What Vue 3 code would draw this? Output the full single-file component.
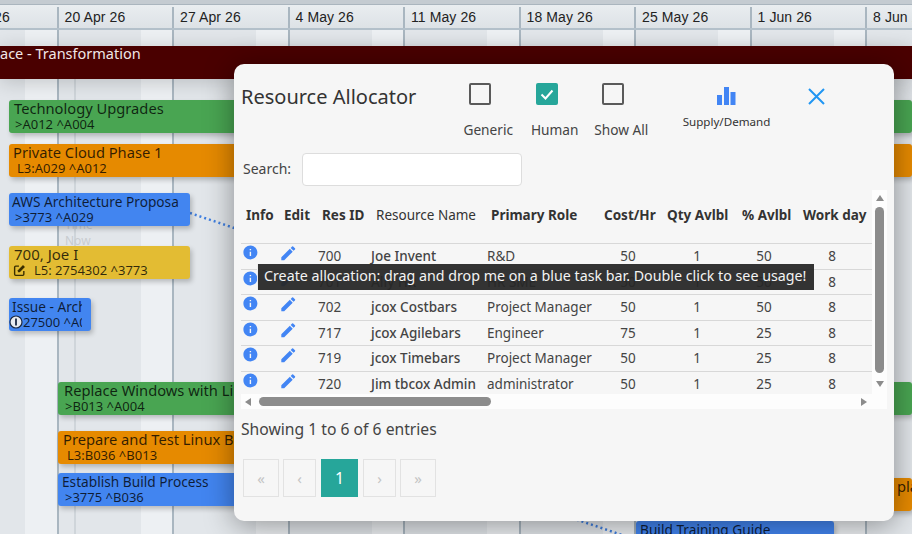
<script setup>
const weeks = ['13 Apr 26', '20 Apr 26', '27 Apr 26', '4 May 26', '11 May 26', '18 May 26', '25 May 26', '1 Jun 26', '8 Jun 26']
const bars = [
  { t: 'Technology Upgrades', s: '>A012 ^A004', c: 'green', x: 9, y: 100, w: 903, tx: 5, sx: 6 },
  { t: 'Private Cloud Phase 1', s: 'L3:A029 ^A012', c: 'orange', x: 9, y: 144, w: 903, tx: 4, sx: 8 },
  { t: 'AWS Architecture Proposa', s: '>3773 ^A029', c: 'blue', x: 9, y: 193, w: 181, tx: 3, sx: 6 },
  { t: '700, Joe I', s: 'L5: 2754302 ^3773', c: 'yellow', x: 9, y: 246, w: 181, tx: 5, sx: 25, edit: true },
  { t: 'Issue - Arch', s: '27500 ^A0', c: 'blue', x: 9, y: 298, w: 82, tx: 3, sx: 14, issue: true, clip: 73 },
  { t: 'Replace Windows with Linux', s: '>B013 ^A004', c: 'green', x: 58, y: 382, w: 854, tx: 6, sx: 7 },
  { t: 'Prepare and Test Linux Build', s: 'L3:B036 ^B013', c: 'orange', x: 58, y: 431, w: 600, tx: 5, sx: 9 },
  { t: 'Establish Build Process', s: '>3775 ^B036', c: 'blue', x: 58, y: 473, w: 600, tx: 4, sx: 7 },
  { t: 'plan', s: '', c: 'orange', x: 700, y: 478, w: 212, tx: 197, sx: 0 },
  { t: 'Build Training Guide', s: '', c: 'blue', x: 636, y: 521, w: 198, tx: 4, sx: 4 }
]
const columns = [
  { label: 'Info', w: 38, bold: true },
  { label: 'Edit', w: 38, bold: true },
  { label: 'Res ID', w: 54, bold: true },
  { label: 'Resource Name', w: 115 },
  { label: 'Primary Role', w: 113, bold: true },
  { label: 'Cost/Hr', w: 63, bold: true },
  { label: 'Qty Avlbl', w: 75, bold: true },
  { label: '% Avlbl', w: 61, bold: true },
  { label: 'Work day', w: 74, bold: true }
]
const rows = [
  ['700', 'Joe Invent', 'R&D', '50', '1', '50', '8'],
  ['701', 'Ally HR', 'HR SME', '50', '1', '50', '8'],
  ['702', 'jcox Costbars', 'Project Manager', '50', '1', '50', '8'],
  ['717', 'jcox Agilebars', 'Engineer', '75', '1', '25', '8'],
  ['719', 'jcox Timebars', 'Project Manager', '50', '1', '25', '8'],
  ['720', 'Jim tbcox Admin', 'administrator', '50', '1', '25', '8']
]
const checks = [
  { label: 'Generic', on: false },
  { label: 'Human', on: true },
  { label: 'Show All', on: false }
]
const pages = ['«', '‹', '1', '›', '»']
</script>

<template>
  <div class="page">
    <div class="top-strip"></div>
    <div class="weeks">
      <div v-for="w in weeks" :key="w" class="week">{{ w }}</div>
    </div>
    <div class="days">
      <div v-for="w in weeks" :key="w" class="day-week"></div>
    </div>
    <div class="canvas">
      <div v-for="w in weeks" :key="w" class="col"></div>
    </div>

    <div class="now-line"></div>
    <div class="now-text">Time<br />Now</div>

    <div class="summary">ace - Transformation</div>

    <svg class="links" width="912" height="534">
      <path d="M190 213 L240 230" />
      <path d="M572 518 L625 536" />
    </svg>

    <div
      v-for="b in bars"
      :key="b.t"
      class="bar"
      :class="b.c"
      :style="{ left: b.x + 'px', top: b.y + 'px', width: b.w + 'px' }"
    >
      <div class="bar-title" :style="{ paddingLeft: b.tx + 'px', maxWidth: (b.clip || b.w) + 'px' }">{{ b.t }}</div>
      <div class="bar-sub" :style="{ paddingLeft: b.sx + 'px', maxWidth: (b.clip || b.w) + 'px' }">{{ b.s }}</div>
      <svg v-if="b.edit" class="bar-edit" viewBox="0 0 24 24" width="13" height="13">
        <path d="M11 4H5a2 2 0 0 0-2 2v13a2 2 0 0 0 2 2h13a2 2 0 0 0 2-2v-6" fill="none" stroke="#3a2f00" stroke-width="2.6" />
        <path d="M9 15v-3.5L18.5 2 22 5.5 12.500 15z" fill="#3a2f00" />
      </svg>
      <svg v-if="b.issue" class="bar-issue" viewBox="0 0 14 14" width="14" height="14">
        <circle cx="7" cy="7" r="6" fill="#e8ebf0" stroke="#1c2a44" stroke-width="1.200" />
        <rect x="6.100" y="3.500" width="1.800" height="7" fill="#1c2a44" />
      </svg>
    </div>

    <section class="modal">
      <header class="modal-head">
        <h2 class="title">Resource Allocator</h2>
        <div v-for="c in checks" :key="c.label" class="check">
          <span class="box" :class="{ on: c.on }">
            <svg v-if="c.on" viewBox="0 0 22 22" width="22" height="22">
              <path d="M5.500 11.500 L9.500 15.500 L16.500 7.500" fill="none" stroke="#fff" stroke-width="2" />
            </svg>
          </span>
          <span class="check-label">{{ c.label }}</span>
        </div>
        <div class="supply">
          <svg viewBox="0 0 19 18" width="19" height="18">
            <rect x="0" y="8" width="5" height="10" fill="#4285f4" />
            <rect x="7" y="0" width="5" height="18" fill="#4285f4" />
            <rect x="13.500" y="5" width="5" height="13" fill="#4285f4" />
          </svg>
          <span class="supply-label">Supply/Demand</span>
        </div>
        <svg class="close" viewBox="0 0 17 17" width="17" height="17">
          <path d="M1 1 L16 16 M16 1 L1 16" stroke="#2196f3" stroke-width="2" fill="none" />
        </svg>
      </header>

      <div class="search">
        <label class="search-label">Search:</label>
        <input class="search-input" type="text" />
      </div>

      <div class="scroller">
        <div class="table">
          <div class="thead">
            <div
              v-for="c in columns"
              :key="c.label"
              class="th"
              :class="{ bold: c.bold }"
              :style="{ width: c.w + 'px' }"
            >{{ c.label }}</div>
          </div>
          <div v-for="r in rows" :key="r[0]" class="tr">
            <div class="td td-info">
              <svg viewBox="0 0 24 24" width="16.800" height="16.800">
                <path fill="#4285f4" d="M12 2C6.480 2 2 6.480 2 12s4.480 10 10 10 10-4.480 10-10S17.520 2 12 2zm1 15h-2v-6h2v6zm0-8h-2V7h2v2z" />
              </svg>
            </div>
            <div class="td td-edit">
              <svg viewBox="0 0 24 24" width="18.500" height="18.500">
                <path fill="#4285f4" d="M3 17.250V21h3.750L17.810 9.940l-3.750-3.750L3 17.250zM20.710 7.040a1 1 0 0 0 0-1.410l-2.340-2.340a1 1 0 0 0-1.410 0l-1.830 1.830 3.750 3.750 1.830-1.830z" />
              </svg>
            </div>
            <div class="td c-id">{{ r[0] }}</div>
            <div class="td c-name">{{ r[1] }}</div>
            <div class="td c-role">{{ r[2] }}</div>
            <div class="td num c-cost">{{ r[3] }}</div>
            <div class="td num c-qty">{{ r[4] }}</div>
            <div class="td num c-pct">{{ r[5] }}</div>
            <div class="td num c-day">{{ r[6] }}</div>
          </div>
        </div>
        <div class="vbar">
          <span class="arrow up"></span>
          <span class="vthumb"></span>
          <span class="arrow down"></span>
        </div>
        <div class="hbar">
          <span class="arrow left"></span>
          <span class="hthumb"></span>
          <span class="arrow right"></span>
        </div>
        <div class="corner"></div>
      </div>

      <p class="info">Showing 1 to 6 of 6 entries</p>

      <nav class="pager">
        <span v-for="p in pages" :key="p" class="pg" :class="{ active: p === '1' }">{{ p }}</span>
      </nav>
    </section>

    <div class="tooltip">Create allocation: drag and drop me on a blue task bar. Double click to see usage!</div>
  </div>
</template>

<style scoped>
.page {
  position: relative;
  width: 912px;
  height: 534px;
  overflow: hidden;
  background: #e2e6ea;
  font-family: "Noto Sans", "Open Sans", sans-serif;
  color: #333;
}
.top-strip {
  height: 5px;
  background: #c4cbd1;
  border-bottom: 1px solid #aab5be;
  box-sizing: border-box;
}
.weeks {
  display: flex;
  height: 23px;
  margin-left: -57px;
  border-bottom: 2px solid #b3c0ca;
  background: linear-gradient(#e9edf0, #dde2e6);
}
.week {
  flex: 0 0 115.5px;
  box-sizing: border-box;
  padding: 0 0 0 6px;
  margin-top: 2px;
  font: 14px/20px "Liberation Sans", Arial, sans-serif;
  letter-spacing: 0.1px;
  color: #222;
  text-align: left;
  white-space: nowrap;
  border-right: 2px solid #a9b6c0;
}
.days {
  display: flex;
  height: 18px;
  margin-left: -57px;
}
.day-week,
.col {
  flex: 0 0 115.5px;
  box-sizing: border-box;
  border-right: 2px solid #a9b6c0;
  background: linear-gradient(90deg, #e2e6ea 0 82px, #edf0f3 82px);
}
.canvas {
  display: flex;
  height: 488px;
  margin-left: -57px;
}
.now-line {
  position: absolute;
  left: 74px;
  top: 79px;
  width: 2px;
  height: 455px;
  background: #cfd5da;
}
.now-text {
  position: absolute;
  left: 65px;
  top: 217px;
  font-size: 12px;
  line-height: 16px;
  color: #c8ccd0;
}
.summary {
  position: absolute;
  left: 0;
  top: 46px;
  width: 912px;
  height: 33px;
  background: #4a0000;
  color: #f0e6e6;
  font-size: 14.500px;
  line-height: 15px;
  box-shadow: 0 3px 20px rgba(0, 0, 0, 0.18);
}
.links {
  position: absolute;
  left: 0;
  top: 0;
}
.links path {
  fill: none;
  stroke: #3f7fe0;
  stroke-width: 2.500;
  stroke-dasharray: 2 3;
}
.bar {
  position: absolute;
  height: 33px;
  border-radius: 3px;
  color: rgba(0, 0, 0, 0.78);
  box-shadow: 2px 3px 5px rgba(0, 0, 0, 0.22);
  overflow: hidden;
  white-space: nowrap;
}
.green { background: #49a552; }
.orange { background: #e68a00; }
.blue { background: #4285f0; }
.yellow { background: #e3bc33; }
.bar-title {
  box-sizing: border-box;
  margin-top: -1px;
  font-size: 14.700px;
  line-height: 19px;
  overflow: hidden;
}
.blue .bar-title { font-size: 13.700px; }
.yellow .bar-title { font-size: 15px; }
.bar-sub {
  box-sizing: border-box;
  margin-top: -2px;
  font-size: 13px;
  line-height: 17px;
  overflow: hidden;
}
.bar-edit {
  position: absolute;
  left: 4px;
  top: 18px;
}
.bar-issue {
  position: absolute;
  left: 0;
  top: 17px;
}
.modal {
  position: absolute;
  left: 234px;
  top: 64px;
  width: 660px;
  height: 457px;
  box-sizing: border-box;
  padding: 0 7px;
  background: #f6f6f6;
  border-radius: 10px;
  box-shadow: 0 4px 30px rgba(0, 0, 0, 0.4);
}
.modal-head {
  display: flex;
  height: 89px;
  align-items: flex-start;
}
.title {
  margin: 19px 0 0;
  width: 214px;
  flex: none;
  font-size: 20px;
  line-height: 28px;
  font-weight: 400;
  color: #333;
  white-space: nowrap;
}
.check {
  display: flex;
  flex-direction: column;
  align-items: center;
  flex: none;
  width: 66.500px;
  padding-top: 19px;
}
.box {
  box-sizing: border-box;
  width: 22px;
  height: 22px;
  border: 2px solid #5a5a5a;
  border-radius: 2px;
  margin-left: -16px;
}
.box.on {
  border: 0;
  background: #26a69a;
}
.check-label {
  margin-top: 15px;
  font-size: 13.700px;
  line-height: 20px;
  white-space: nowrap;
  color: #444;
}
.supply {
  margin-left: 27px;
  width: 90px;
  padding-top: 23px;
  display: flex;
  flex-direction: column;
  align-items: center;
}
.supply-label {
  margin-top: 9px;
  font-size: 11.600px;
  line-height: 16px;
  white-space: nowrap;
}
.close {
  margin: 24px 0 0 36px;
}
.search {
  display: flex;
  align-items: center;
  height: 33px;
  padding-left: 2px;
}
.search-label {
  width: 59px;
  padding-bottom: 2px;
  font-size: 14px;
  color: #444;
}
.search-input {
  box-sizing: border-box;
  width: 220px;
  height: 33px;
  background: #fff;
  border: 1px solid #ddd;
  border-radius: 4px;
}
.scroller {
  display: grid;
  grid-template-columns: 631px 15px;
  grid-template-rows: 204px 15px;
  margin-top: 4px;
}
.table {
  overflow: hidden;
  font-size: 13.500px;
}
.thead {
  display: flex;
  height: 54px;
  box-sizing: border-box;
  border-bottom: 1.500px solid #d8d8d8;
}
.th {
  flex: none;
  box-sizing: border-box;
  padding: 16px 0 0 5px;
  font-size: 13.500px;
  line-height: 18px;
  white-space: nowrap;
  color: #333;
}
.th.bold { font-weight: 700; }
.tr {
  display: flex;
  height: 25.600px;
  box-sizing: border-box;
  border-bottom: 1.500px solid #d8d8d8;
}
.td {
  flex: none;
  box-sizing: border-box;
  padding-top: 3px;
  line-height: 19px;
  white-space: nowrap;
  color: #444;
}
.td-info { width: 39px; padding: 0 0 0 1px; }
.td-edit { width: 38px; padding: 0; }
.td-edit svg { margin-left: -1px; }
.td-info svg,
.td-edit svg { display: block; }
.c-id { width: 53px; }
.c-name { width: 116px; font-weight: 500; color: #444; }
.c-role { width: 113px; }
.c-cost { width: 56px; }
.c-qty { width: 82px; }
.c-pct { width: 52px; }
.c-day { width: 84px; }
.num { text-align: center; }
.vbar,
.hbar,
.corner {
  background: #fdfdfd;
  position: relative;
}
.vbar {
  display: flex;
  flex-direction: column;
  align-items: center;
}
.vthumb {
  width: 9px;
  height: 166px;
  margin-top: 6px;
  border-radius: 5px;
  background: #8c8c8c;
}
.hbar {
  display: flex;
  align-items: center;
}
.hthumb {
  width: 232px;
  height: 9px;
  margin-left: 8px;
  border-radius: 5px;
  background: #8c8c8c;
}
.arrow {
  width: 0;
  height: 0;
  border: 4.500px solid transparent;
  flex: none;
}
.arrow.up {
  border-bottom: 6px solid #8c8c8c;
  border-top: 0;
  margin-top: 5px;
}
.arrow.down {
  border-top: 6px solid #8c8c8c;
  border-bottom: 0;
  margin-top: 8px;
}
.arrow.left {
  border-right: 6px solid #8c8c8c;
  border-left: 0;
  margin-left: 4px;
}
.arrow.right {
  border-left: 6px solid #8c8c8c;
  border-right: 0;
  margin-left: 370px;
}
.info {
  margin: 10px 0 0;
  font-size: 15.700px;
  line-height: 20px;
  color: #444;
}
.pager {
  display: flex;
  gap: 4px;
  margin: 20px 0 0 2px;
}
.pg {
  box-sizing: border-box;
  width: 33px;
  height: 38px;
  border: 1px solid #e2e2e2;
  text-align: center;
  font-size: 15px;
  line-height: 36px;
  color: #c4c4c4;
}
.pg:first-child,
.pg:last-child { width: 36px; }
.pg.active {
  width: 37px;
  margin: 0 1px;
  background: #26a69a;
  border-color: #26a69a;
  color: #fff;
  font-size: 16px;
}
.tooltip {
  position: absolute;
  left: 257px;
  top: 264px;
  width: 557px;
  height: 26px;
  box-sizing: border-box;
  padding-left: 6px;
  background: rgba(38, 38, 38, 0.94);
  border-left: 1px solid #eee;
  color: #f4f4f4;
  font-size: 14.250px;
  line-height: 24px;
  white-space: nowrap;
}
</style>
